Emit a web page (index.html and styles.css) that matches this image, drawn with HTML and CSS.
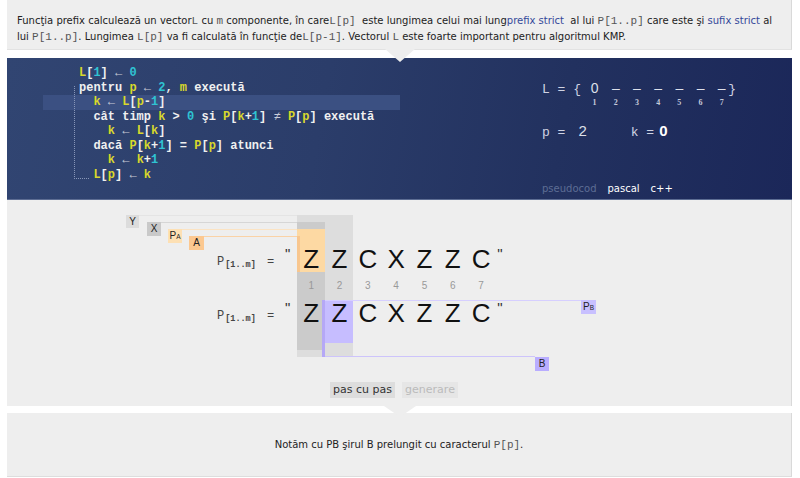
FILE: index.html
```html
<!DOCTYPE html>
<html lang="ro">
<head>
<meta charset="utf-8">
<title>KMP – funcţia prefix</title>
<link rel="stylesheet" href="styles.css">
</head>
<body>
<div class="page">
  <section class="intro">
    <p class="line">Funcţia prefix calculează un vector<span class="mono">L</span> cu <span class="mono">m</span> componente, în care<span class="mono">L[p]</span>  este lungimea celui mai lung<a class="link">prefix strict</a>  al lui <span class="mono">P[1..p]</span> care este şi <a class="link">sufix strict</a> al</p>
    <p class="line">lui <span class="mono">P[1..p]</span>. Lungimea <span class="mono">L[p]</span> va fi calculată în funcţie de<span class="mono">L[p-1]</span>. Vectorul <span class="mono">L</span> este foarte important pentru algoritmul KMP.</p>
  </section>

  <section class="code-panel">
    <div class="code">
      <div class="ln"><span class="v">L</span>[<span class="n">1</span>] <span class="ar">←</span> <span class="n">0</span></div>
      <div class="loop">
        <div class="ln">pentru <span class="v">p</span> <span class="ar">←</span> <span class="n">2</span>, <span class="v">m</span> execută</div>
        <div class="ln hl">  <span class="v">k</span> <span class="ar">←</span> <span class="v">L</span>[<span class="v">p</span>-<span class="n">1</span>]</div>
        <div class="ln">  cât timp <span class="v">k</span> &gt; <span class="n">0</span> şi <span class="v">P</span>[<span class="v">k</span>+<span class="n">1</span>] <span class="ar">≠</span> <span class="v">P</span>[<span class="v">p</span>] execută</div>
        <div class="ln">    <span class="v">k</span> <span class="ar">←</span> <span class="v">L</span>[<span class="v">k</span>]</div>
        <div class="ln">  dacă <span class="v">P</span>[<span class="v">k</span>+<span class="n">1</span>] = <span class="v">P</span>[<span class="v">p</span>] atunci</div>
        <div class="ln">    <span class="v">k</span> <span class="ar">←</span> <span class="v">k</span>+<span class="n">1</span></div>
        <div class="ln">  <span class="v">L</span>[<span class="v">p</span>] <span class="ar">←</span> <span class="v">k</span></div>
      </div>
    </div>

    <div class="state">
      <div class="lrow">
        <span class="sm">L = { </span>
        <span class="cell">0</span><span class="cell">–</span><span class="cell">–</span><span class="cell">–</span><span class="cell">–</span><span class="cell">–</span><span class="cell">–</span>
        <span class="sm close">}</span>
      </div>
      <div class="irow">
        <span class="icell">1</span><span class="icell">2</span><span class="icell">3</span><span class="icell">4</span><span class="icell">5</span><span class="icell">6</span><span class="icell">7</span>
      </div>
      <div class="vrow">
        <span class="sm">p =</span><span class="val pval">2</span>
        <span class="sm kname">k =</span><span class="val kval">0</span>
      </div>
      <div class="tabs">
        <span class="tab dim">pseudocod</span>
        <span class="tab">pascal</span>
        <span class="tab">c++</span>
      </div>
    </div>
  </section>

  <section class="viz">
    <div class="canvas">
      <div class="reg reg-y"></div>
      <div class="reg reg-x"></div>
      <div class="reg reg-pa"></div>
      <div class="reg reg-a"></div>
      <div class="reg reg-pb"></div>
      <div class="reg reg-b"></div>

      <div class="hline ln-y"></div>
      <div class="hline ln-x"></div>
      <div class="hline ln-pa"></div>
      <div class="hline ln-a"></div>
      <div class="hline ln-pb"></div>
      <div class="hline ln-b"></div>

      <div class="tag tag-y">Y</div>
      <div class="tag tag-x">X</div>
      <div class="tag tag-pa">P<small>A</small></div>
      <div class="tag tag-a">A</div>
      <div class="tag tag-pb">P<small>B</small></div>
      <div class="tag tag-b">B</div>

      <div class="srow srow-1">
        <span class="pv">P<sub>[1..m]</sub></span><span class="eq">=</span><span class="q">"</span>
        <span class="ch">Z</span><span class="ch">Z</span><span class="ch">C</span><span class="ch">X</span><span class="ch">Z</span><span class="ch">Z</span><span class="ch">C</span>
        <span class="q qe">"</span>
      </div>
      <div class="idx">
        <span class="ic">1</span><span class="ic">2</span><span class="ic">3</span><span class="ic">4</span><span class="ic">5</span><span class="ic">6</span><span class="ic">7</span>
      </div>
      <div class="srow srow-2">
        <span class="pv">P<sub>[1..m]</sub></span><span class="eq">=</span><span class="q">"</span>
        <span class="ch">Z</span><span class="ch">Z</span><span class="ch">C</span><span class="ch">X</span><span class="ch">Z</span><span class="ch">Z</span><span class="ch">C</span>
        <span class="q qe">"</span>
      </div>
    </div>
    <div class="buttons">
      <span class="btn on">pas cu pas</span>
      <span class="btn off">generare</span>
    </div>
  </section>

  <section class="note">
    <p>Notăm cu PB şirul B prelungit cu caracterul <span class="mono">P[p]</span>.</p>
  </section>
</div>
</body>
</html>
```

FILE: styles.css
```css
* { box-sizing: border-box; }
html, body { margin: 0; padding: 0; background: #ffffff; }
body { font-family: "DejaVu Sans", Verdana, sans-serif; color: #222; }

.page { margin-left: 7px; width: 785px; }

.mono { font-family: "Liberation Mono", "Courier New", monospace; font-size: 11px; color: #555; white-space: pre; }
.link { color: #34489a; text-decoration: none; }

/* intro */
.intro {
  position: relative;
  height: 50px;
  background: #eeeeee;
  border-right: 1px solid #d9d9d9;
  border-bottom: 1px solid #e2e2e2;
  padding: 13px 10px 0 10px;
  font-size: 10px;
  line-height: 15px;
}
.intro .line { margin: 0; white-space: pre; }
.intro::after {
  content: "";
  position: absolute;
  z-index: 3;
  left: 378px;
  top: 49px;
  border-left: 15px solid transparent;
  border-right: 15px solid transparent;
  border-top: 13px solid #eeeeee;
}

/* code panel */
.code-panel {
  margin-top: 8px;
  height: 142px;
  display: flex;
  background: linear-gradient(100deg, #314572 0%, #2b3d6a 40%, #22315f 70%, #1b2759 100%);
  box-shadow: inset 0 -1px 0 #5d6d93;
}
.code {
  margin-left: 36px;
  width: 357px;
  padding-top: 8px;
  font-family: "Liberation Mono", "Courier New", monospace;
  font-weight: bold;
  font-size: 12px;
  line-height: 14.5px;
  color: #f0f0f0;
}
.ln { height: 14.5px; padding-left: 36px; white-space: pre; }
.ln.hl { background: #3b5082; }
.v { color: #d8d82c; }
.n { color: #2fc3d3; }
.ar { color: #c9ccd8; font-weight: normal; }
.loop { position: relative; }
.loop::before {
  content: "";
  position: absolute;
  left: 31px;
  top: 5px;
  bottom: 3px;
  width: 14px;
  border-left: 1px dotted #8796b8;
  border-bottom: 1px dotted #8796b8;
}

.state {
  margin-left: 142px;
  padding-top: 22px;
  padding-bottom: 4px;
  display: flex;
  flex-direction: column;
  color: #cfd3e3;
}
.sm { font-family: "Liberation Mono", "Courier New", monospace; font-size: 13px; white-space: pre; }
.lrow { display: flex; align-items: baseline; height: 16px; line-height: 16px; }
.lrow .sm { width: 42px; }
.lrow .close { width: auto; margin-left: -4px; }
.cell { width: 21.2px; text-align: center; font-family: "Liberation Sans", Arial, sans-serif; font-size: 14px; color: #dde0ea; }
.irow { display: flex; margin-top: 1px; padding-left: 42px; height: 12px; line-height: 12px; }
.icell { width: 21.2px; text-align: center; font-family: "Liberation Serif", serif; font-weight: bold; font-size: 8px; color: #c5c9da; }
.vrow { display: flex; align-items: baseline; margin-top: 13px; height: 18px; line-height: 18px; }
.val { font-family: "Liberation Sans", Arial, sans-serif; font-size: 15px; color: #dde0ea; }
.pval { margin-left: 13px; }
.kname { margin-left: 44px; }
.kval { margin-left: 5px; font-weight: bold; color: #ffffff; }
.tabs { margin-top: auto; display: flex; gap: 11px; height: 14px; line-height: 14px; font-size: 10px; color: #ffffff; }
.tab.dim { color: #5d6d94; }

/* visualisation */
.viz {
  position: relative;
  height: 206px;
  background: #eeeeee;
  border-right: 1px solid #d9d9d9;
}
.viz::after {
  content: "";
  position: absolute;
  z-index: 3;
  left: 377px;
  bottom: -11px;
  border-left: 16px solid transparent;
  border-right: 16px solid transparent;
  border-top: 11px solid #eeeeee;
}
.canvas { position: relative; height: 182px; }
.reg, .hline, .tag, .srow, .idx { position: absolute; }

.reg-y  { left: 290px; top: 15px;  width: 56px; height: 142px; background: #dddddd; }
.reg-x  { left: 290px; top: 22px;  width: 28px; height: 128px; background: #cbcbcb; }
.reg-pa { left: 290px; top: 29px;  width: 28px; height: 43px;  background: #fdd9a3; }
.reg-a  { left: 290px; top: 36px;  width: 3px;  height: 36px;  background: #f8c68e; }
.reg-pb { left: 315px; top: 100px; width: 31px; height: 43px;  background: #c6bdff; }
.reg-b  { left: 315px; top: 100px; width: 3px;  height: 57px;  background: #b5a8f6; }

.hline { height: 1px; }
.ln-y  { left: 132px; top: 15px;  width: 158px; background: #e4e4e4; }
.ln-x  { left: 154px; top: 22px;  width: 136px; background: #d6d6d6; }
.ln-pa { left: 175px; top: 29px;  width: 115px; background: #fbe3c3; }
.ln-a  { left: 197px; top: 36px;  width: 93px;  background: #fad2a6; }
.ln-pb { left: 318px; top: 100px; width: 256px; background: #d6cfff; }
.ln-b  { left: 318px; top: 156px; width: 210px; background: #cdc4fb; }

.tag {
  height: 14px;
  width: 14px;
  line-height: 14px;
  text-align: center;
  font-family: "Liberation Sans", Arial, sans-serif;
  font-size: 10px;
  color: #222;
}
.tag small { font-size: 6.5px; }
.tag-y  { left: 119px; top: 15px;  width: 13px; height: 13px; line-height: 13px; background: #dcdcdc; }
.tag-x  { left: 140px; top: 22px;  background: #c9c9c9; }
.tag-pa { left: 161px; top: 29px;  background: #fde0b4; }
.tag-a  { left: 182px; top: 36px;  width: 15px; background: #fcc890; }
.tag-pb { left: 574px; top: 100px; width: 15px; background: #c8c0ff; }
.tag-b  { left: 528px; top: 157px; background: #b9adff; }

.srow { left: 210px; display: flex; align-items: flex-start; height: 30px; }
.srow-1 { top: 44px; }
.srow-2 { top: 98px; }
.pv {
  width: 50px;
  padding-top: 12px;
  line-height: 12px;
  font-family: "Liberation Mono", "Courier New", monospace;
  font-size: 12px;
  color: #444;
}
.pv sub { font-size: 8.5px; font-weight: bold; vertical-align: -2px; margin-left: 1px; }
.eq {
  width: 18px;
  padding-top: 12px;
  line-height: 12px;
  font-family: "Liberation Mono", "Courier New", monospace;
  font-size: 12px;
  color: #444;
}
.q {
  width: 12px;
  padding-top: 2px;
  line-height: 16px;
  font-family: "Liberation Sans", Arial, sans-serif;
  font-size: 15px;
  color: #333;
}
.q.qe { width: auto; margin-left: 2px; }
.ch {
  width: 28.33px;
  text-align: center;
  line-height: 30px;
  font-family: "Liberation Sans", Arial, sans-serif;
  font-size: 26px;
  color: #111;
}
.idx { left: 290px; top: 80px; display: flex; height: 12px; line-height: 12px; }
.ic { width: 28.33px; text-align: center; font-family: "Liberation Sans", Arial, sans-serif; font-size: 10px; color: #999; }

.buttons { display: flex; padding-left: 323px; gap: 7px; }
.btn { height: 16px; line-height: 16px; font-size: 11px; text-align: center; }
.btn.on { width: 65px; background: #dddddd; color: #333; }
.btn.off { width: 56px; background: #e6e6e6; color: #bbbbbb; }

/* note */
.note {
  margin-top: 7px;
  height: 64px;
  background: #eeeeee;
  border-right: 1px solid #d9d9d9;
  border-bottom: 1px solid #dddddd;
  display: flex;
  align-items: center;
  justify-content: center;
  font-size: 10px;
  line-height: 15px;
}
.note p { margin: 0; }
```
